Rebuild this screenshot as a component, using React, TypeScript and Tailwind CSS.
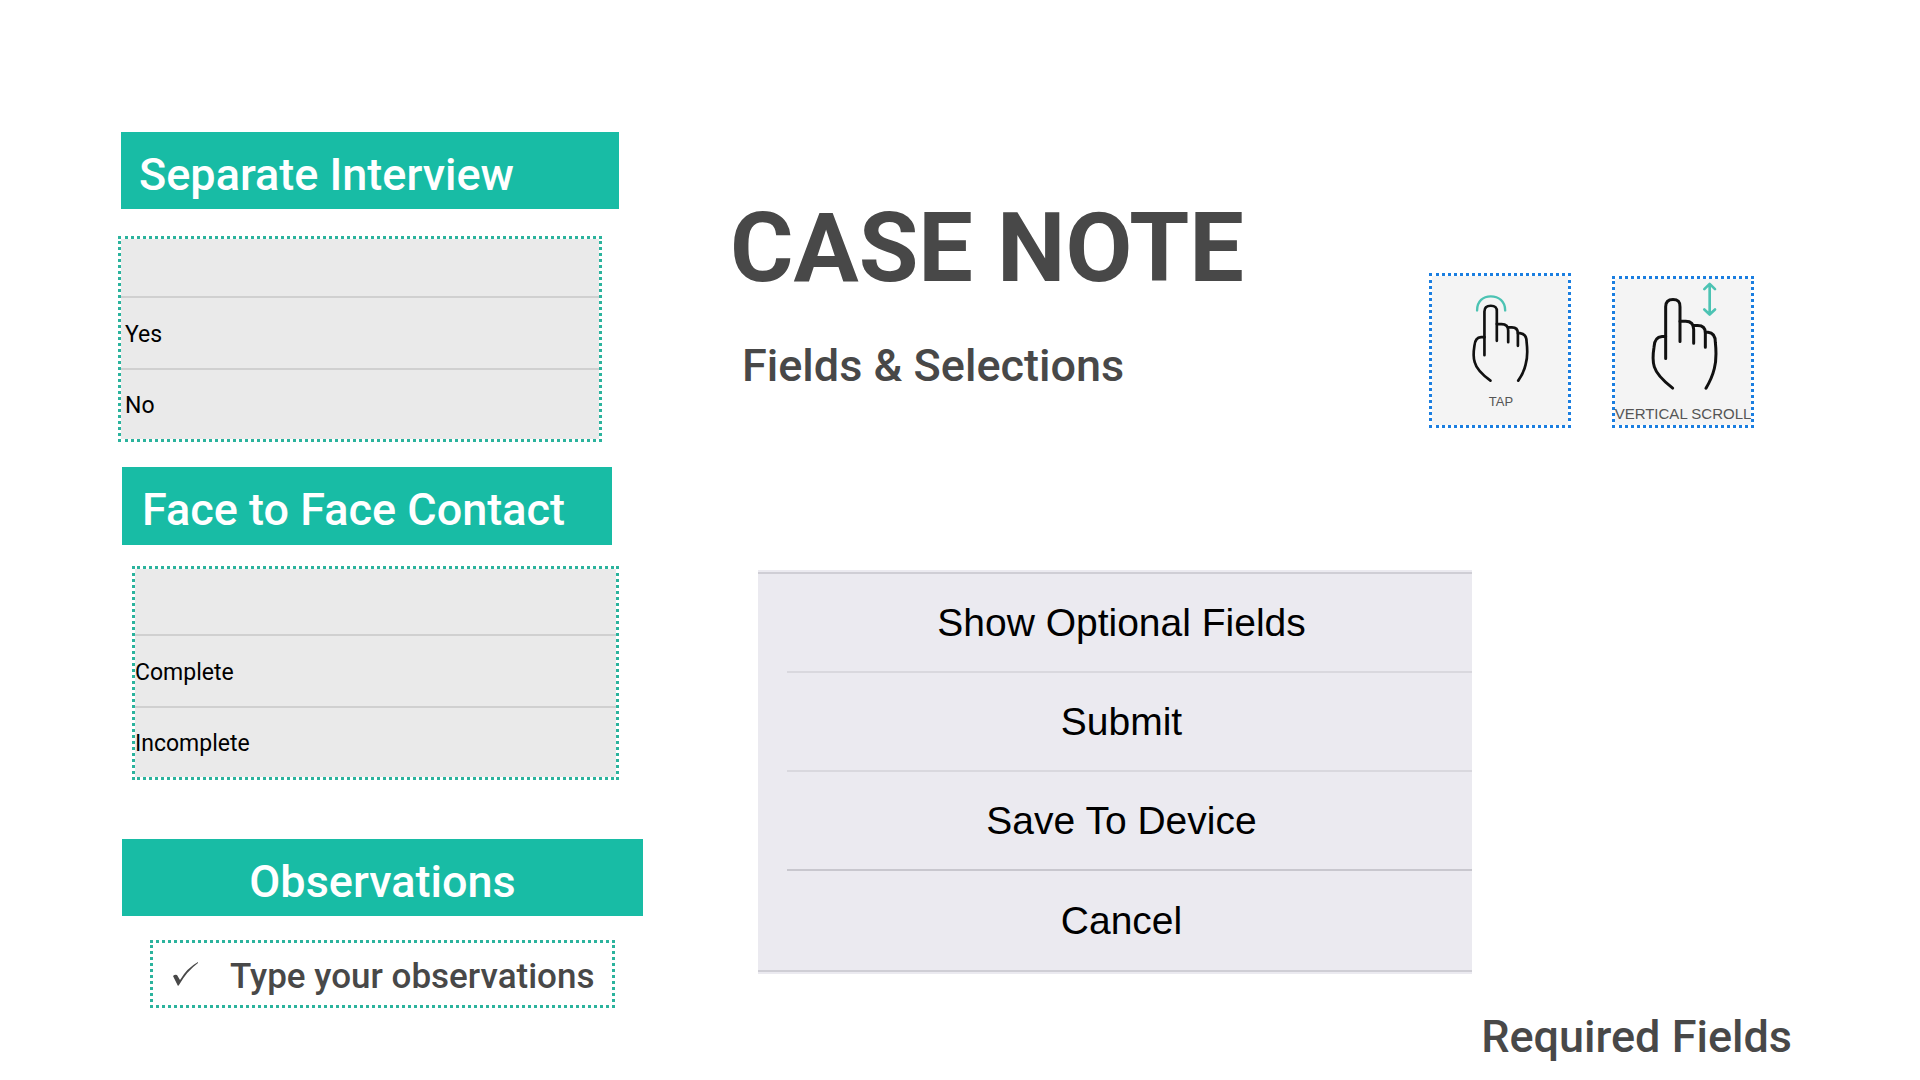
import React from 'react'

interface PickerProps {
  label: string
  options: string[]
  className: string
  rowClassName: string
}

const menuItems = ['Show Optional Fields', 'Submit', 'Save To Device', 'Cancel']

const Picker: React.FC<PickerProps> = ({ label, options, className, rowClassName }) => {
  return (
    <ul
      aria-label={label}
      className={`flex flex-col border-3 border-dotted border-[#2bb39d] bg-[#eaeaea] bg-clip-padding divide-y-2 divide-[#d0d0d0] text-[23px] text-black font-[Roboto,sans-serif] ${className}`}
    >
      {options.map((option) => (
        <li key={option} className={rowClassName}>
          <button type="button" aria-label={option || 'None'} className="h-full w-full pt-1 text-left">
            {option}
          </button>
        </li>
      ))}
    </ul>
  )
}

const TapIcon = () => (
  <svg viewBox="180 95 185 275" className="h-[92px] w-[62px] shrink-0" fill="none" strokeLinecap="round" strokeLinejoin="round">
    <path d="M201 150C201 122 219 108 242 108S285 122 285 150" stroke="#4cc3b3" strokeWidth="7" />
    <g stroke="#111" strokeWidth="8">
      <path d="M223 284V153Q223 136 242 136T260 153V241" />
      <path d="M260 191H274Q294 191 294 210V245" />
      <path d="M294 201H305Q323 201 323 219V256" />
      <path d="M323 218H329Q349 220 349 244Q354 286 346 312Q340 338 324 360" />
      <path d="M223 230H213Q195 231 193 256Q188 287 194 305Q200 330 241 360" />
    </g>
  </svg>
)

const ScrollIcon = () => (
  <svg viewBox="715 60 210 335" className="h-[112px] w-[70px] shrink-0" fill="none" strokeLinecap="round" strokeLinejoin="round">
    <path d="M900 72V162M884 87L900 71L916 87M884 148L900 163L916 148" stroke="#4cc3b3" strokeWidth="8" />
    <g stroke="#111" strokeWidth="9">
      <path d="M768 295V140Q768 118 790 118T811 140V244" />
      <path d="M811 183H828Q852 183 852 207V249" />
      <path d="M852 196H864Q887 196 887 218V261" />
      <path d="M887 216H895Q917 218 917 246Q922 294 914 325Q907 354 889 384" />
      <path d="M768 229H757Q734 231 733 261Q727 298 734 320Q742 347 789 384" />
    </g>
  </svg>
)

const App: React.FC = () => {
  return (
    <main className="flex min-h-screen bg-white pl-[118px] font-[Roboto,sans-serif] text-[#484848]">
      <section className="flex w-[525px] shrink-0 flex-col pt-[132px]">
        <h2 className="ml-[3px] mr-6 flex h-[77px] items-center bg-[#18bca5] px-[18px] pt-2 text-[45px] font-medium text-white">
          Separate Interview
        </h2>
        <Picker
          label="Separate Interview"
          options={['', 'Yes', 'No']}
          className="mr-[41px] mt-[27px] h-[206px]"
          rowClassName="min-h-0 flex-1 pl-1 first:flex-none first:h-[59px]"
        />

        <h2 className="ml-1 mr-[31px] mt-[25px] flex h-[78px] items-center bg-[#18bca5] px-5 pt-2 text-[45px] font-medium text-white">
          Face to Face Contact
        </h2>
        <Picker
          label="Face to Face Contact"
          options={['', 'Complete', 'Incomplete']}
          className="ml-[14px] mr-6 mt-[21px] h-[214px]"
          rowClassName="min-h-0 flex-1 first:flex-none first:h-[67px]"
        />

        <h2 className="ml-1 mt-[59px] flex h-[77px] items-center justify-center bg-[#18bca5] pt-2 text-[45px] font-medium text-white">
          <label htmlFor="observations">Observations</label>
        </h2>
        <div className="ml-8 mr-7 mt-6 flex h-[68px] items-center border-3 border-dotted border-[#2bb39d] pl-5">
          <svg viewBox="0 0 25 24" className="h-6 w-[25px] shrink-0" fill="#484848">
            <path d="M0 14Q2 12 4 13L7 18Q14 6 25 0V1Q14 9 6 23L5 24Z" />
          </svg>
          <input
            id="observations"
            type="text"
            placeholder="Type your observations"
            className="ml-8 w-full min-w-0 bg-transparent pt-1.5 text-[35px] font-medium placeholder:text-[#484848] outline-none"
          />
        </div>
      </section>

      <section className="flex flex-1 flex-col pl-[115px]">
        <div className="flex justify-between pr-[166px]">
          <header className="-ml-7 pt-[188px]">
            <h1 className="text-[97px] font-bold leading-[120px]">CASE NOTE</h1>
            <p className="mt-[30px] pl-3 text-[45px] font-medium leading-[56px]">Fields &amp; Selections</p>
          </header>
          <div className="flex items-start gap-[41px] pt-[273px] font-['Liberation_Sans',sans-serif] text-[#555]">
            <figure className="flex h-[155px] w-[142px] flex-col items-center border-3 border-dotted border-[#1a7ee0] bg-[#f4f4f4] bg-clip-padding pl-0.5 pt-4">
              <TapIcon />
              <figcaption className="mt-2.5 text-[13px] leading-4">TAP</figcaption>
            </figure>
            <figure className="mt-[3px] flex h-[152px] w-[142px] flex-col items-center border-3 border-dotted border-[#1a7ee0] bg-[#f4f4f4] bg-clip-padding pt-px">
              <ScrollIcon />
              <figcaption className="mt-3 whitespace-nowrap text-[15px] leading-5">VERTICAL SCROLL</figcaption>
            </figure>
          </div>
        </div>

        <nav
          aria-label="Case note actions"
          className="mr-[448px] mt-[142px] border-y-2 border-[#ebeaf0] bg-[#ebeaf0] font-['Liberation_Sans',sans-serif] text-[39px] text-black"
        >
          <ul className="border-y-2 border-[#cfced5] pl-[29px]">
            {menuItems.map((item) => (
              <li key={item} className="h-[99px] border-b-2 border-[#d9d8de] last:border-b-0 nth-3:border-[#c8c7ce]">
                <button type="button" className="h-full w-full pr-4 pt-px">
                  {item}
                </button>
              </li>
            ))}
          </ul>
        </nav>

        <p className="mt-[35px] self-end pr-[128px] text-[45px] font-medium leading-[56px]">Required Fields</p>
      </section>
    </main>
  )
}

export default App
